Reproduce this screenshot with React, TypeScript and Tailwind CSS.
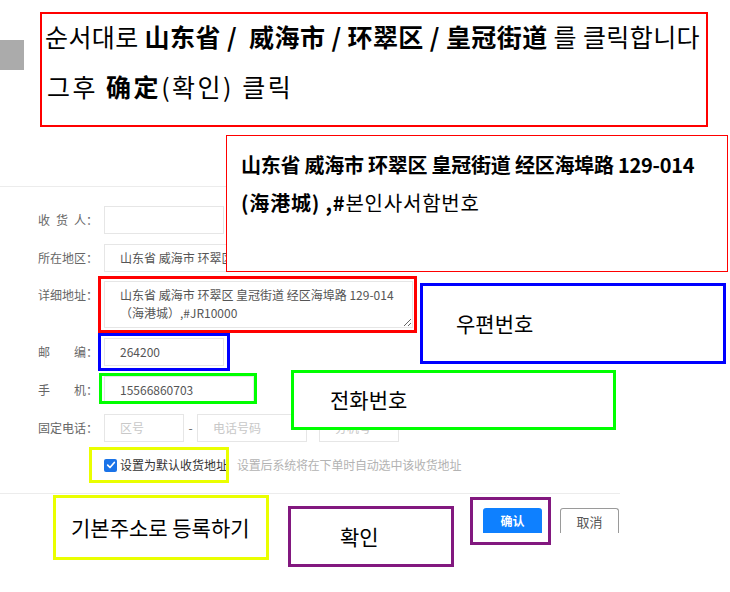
import React from "react"

const cjk = { fontFamily: '"Noto Sans CJK SC", "Noto Sans CJK KR", sans-serif' }
const kr = { fontFamily: '"Noto Sans CJK KR", "Noto Sans CJK SC", sans-serif' }

function Label({ chars }: { chars: string[] }) {
  return (
    <div className="flex w-[104px] shrink-0 pl-[38px] text-[12px] leading-[28px] text-[#666]">
      <div className="flex w-[48px] justify-between">
        {chars.map((c, i) => (
          <span key={i}>{c}</span>
        ))}
      </div>
      <span>：</span>
    </div>
  )
}

function Box({ w, text, placeholder }: { w: string; text?: string; placeholder?: string }) {
  return (
    <div className={`${w} h-[28px] border border-[#e6e6e6] bg-white pl-[15px] text-[12px] leading-[26px] whitespace-nowrap overflow-hidden`}>
      {text ? <span className="text-[#555]">{text}</span> : <span className="text-[#c8c8c8]">{placeholder}</span>}
    </div>
  )
}

export default function App() {
  return (
    <div className="relative w-[730px] h-[592px] overflow-hidden bg-white" style={cjk}>
      {/* page behind the notes */}
      <div className="absolute left-0 top-[40px] w-[24px] h-[30px] bg-[#ababab]" />

      <div className="pt-[186px]">
        <div className="w-[620px] border-t border-[#ececec] pt-[19px]">
          <div className="flex">
            <Label chars={["收", "货", "人"]} />
            <Box w="w-[120px]" />
          </div>
          <div className="flex mt-[10px]">
            <Label chars={["所", "在", "地", "区"]} />
            <Box w="w-[260px]" text="山东省 威海市 环翠区 皇冠街道" />
          </div>
          <div className="flex mt-[9px]">
            <Label chars={["详", "细", "地", "址"]} />
            <textarea
              readOnly
              value={"山东省 威海市 环翠区 皇冠街道 经区海埠路 129-014\n（海港城）,#JR10000"}
              className="w-[309px] h-[47px] border border-[#e6e6e6] pl-[15px] pt-[4px] text-[12px] leading-[18px] text-[#555] outline-none"
              style={cjk}
            />
          </div>
          <div className="flex mt-[10px]">
            <Label chars={["邮", "编"]} />
            <Box w="w-[120px]" text="264200" />
          </div>
          <div className="flex mt-[10px]">
            <Label chars={["手", "机"]} />
            <Box w="w-[150px]" text="15566860703" />
          </div>
          <div className="flex mt-[10px] items-center">
            <Label chars={["固", "定", "电", "话"]} />
            <Box w="w-[80px]" placeholder="区号" />
            <span className="w-[13px] text-center text-[12px] text-[#666]">-</span>
            <Box w="w-[110px]" placeholder="电话号码" />
            <div className="w-[12px]" />
            <Box w="w-[80px]" placeholder="分机号" />
          </div>
          <div className="flex items-center mt-[11px] h-[24px] pl-[104px] text-[12px]">
            <div className="w-[13px] h-[13px] rounded-[2px] bg-[#1a73e8] flex items-center justify-center">
              <svg viewBox="0 0 12 12" className="w-[10px] h-[10px]">
                <path d="M2 6.2 L4.8 9 L10 3" fill="none" stroke="white" strokeWidth="2" strokeLinecap="round" strokeLinejoin="round" />
              </svg>
            </div>
            <span className="ml-[3px] text-[#333]">设置为默认收货地址</span>
            <span className="ml-[9px] text-[#b3b3b3] tracking-[-0.2px]">设置后系统将在下单时自动选中该收货地址</span>
          </div>
          <div className="mt-[16px] border-t border-[#ececec] pt-[14px] flex justify-end gap-[18px] pr-[1px]">
            <div className="w-[59px] h-[25px] rounded-t-[3px] bg-[#0e80ff] text-white text-[12px] font-bold text-center leading-[26px]">
              确认
            </div>
            <div className="w-[59px] h-[25px] rounded-t-[3px] border border-b-0 border-[#9a9a9a] text-[#555] text-[13px] text-center leading-[25px]">
              取消
            </div>
          </div>
        </div>
      </div>

      {/* annotations */}
      <div className="absolute left-[40px] top-[12px] w-[668px] h-[115px] border-2 border-[#ff0000] bg-white pl-[3px] text-[25px] leading-[50px] text-black whitespace-nowrap" style={kr}>
        <div className="-mt-[3px] tracking-[0.4px]">
          순서대로 <b style={cjk}>山东省 /&nbsp; 威海市 / 环翠区 / 皇冠街道</b> 를 클릭합니다
        </div>
        <div className="pl-[2px] tracking-[2.5px]">
          그후 <b style={cjk}>确定</b>(확인) 클릭
        </div>
      </div>

      <div className="absolute left-[226px] top-[135px] w-[502px] h-[137px] border border-[#ff0000] bg-white pl-[14px] pt-[10px] text-[20px] leading-[38px] text-black whitespace-nowrap" style={kr}>
        <div className="font-bold tracking-[-0.25px]" style={cjk}>山东省 威海市 环翠区 皇冠街道 经区海埠路 129-014</div>
        <div className="tracking-[0.8px]">
          <b style={cjk}>(海港城) ,#</b>본인사서함번호
        </div>
      </div>

      <div className="absolute left-[98px] top-[276px] w-[319px] h-[57px] border-[3px] border-[#ff0000]" />
      <div className="absolute left-[98px] top-[333px] w-[132px] h-[38px] border-[3px] border-[#0000ff]" />
      <div className="absolute left-[99px] top-[373px] w-[158px] h-[31px] border-[3px] border-[#00ff00]" />
      <div className="absolute left-[89px] top-[447px] w-[140px] h-[36px] border-[3px] border-[#eaff00]" />
      <div className="absolute left-[470px] top-[497px] w-[81px] h-[48px] border-[3px] border-[#82187f]" />

      <div className="absolute left-[420px] top-[283px] w-[306px] h-[81px] border-[3px] border-[#0000ff] bg-white pl-[33px] flex items-center text-[21px] text-black" style={kr}>
        우편번호
      </div>
      <div className="absolute left-[291px] top-[370px] w-[325px] h-[60px] border-[3px] border-[#00ff00] bg-white pl-[36px] flex items-center text-[21px] text-black" style={kr}>
        전화번호
      </div>
      <div className="absolute left-[53px] top-[495px] w-[216px] h-[65px] border-[3px] border-[#eaff00] bg-white pl-[15px] flex items-center text-[21px] text-black" style={kr}>
        기본주소로 등록하기
      </div>
      <div className="absolute left-[288px] top-[506px] w-[166px] h-[61px] border-[3px] border-[#82187f] bg-white pl-[49px] flex items-center text-[21px] text-black" style={kr}>
        확인
      </div>
    </div>
  )
}
